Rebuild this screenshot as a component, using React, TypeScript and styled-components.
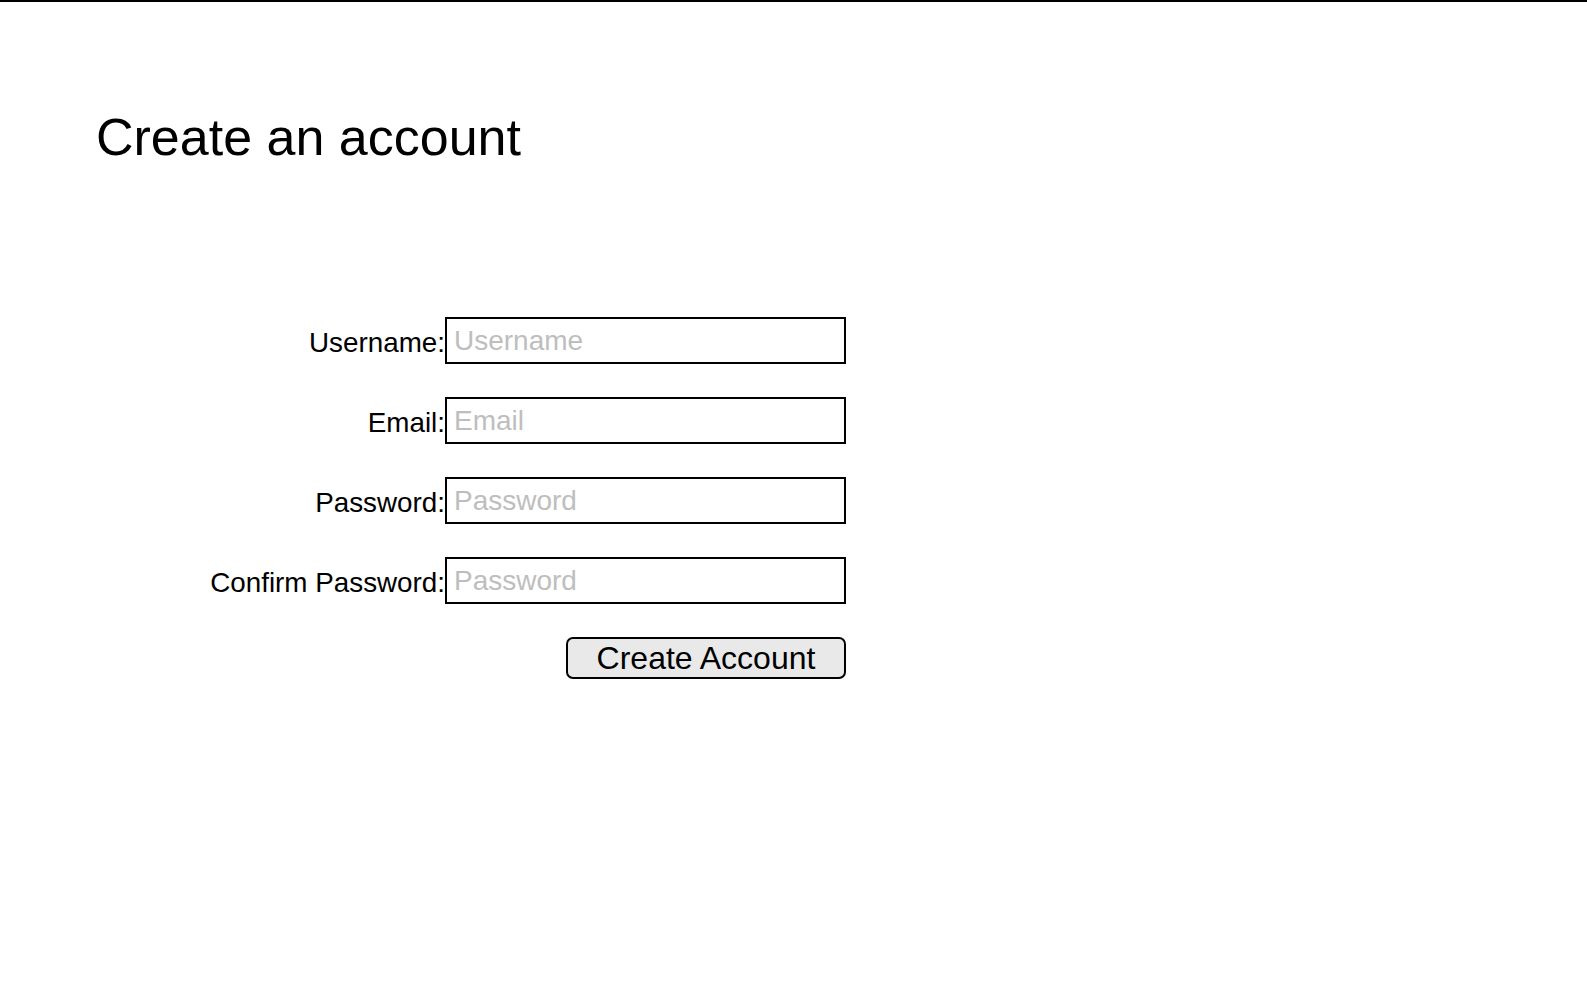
import { useState } from "react";
import styled, { createGlobalStyle } from "styled-components";

const GlobalStyle = createGlobalStyle`
  body {
    margin: 0;
    font-family: "Liberation Sans", Arial, sans-serif;
    background-color: #fff;
    color: #000;
  }
`;

const fields = [
  { name: "username", label: "Username:", type: "text", placeholder: "Username" },
  { name: "email", label: "Email:", type: "email", placeholder: "Email" },
  { name: "password", label: "Password:", type: "password", placeholder: "Password" },
  { name: "confirm", label: "Confirm Password:", type: "password", placeholder: "Password" },
];

const App = () => {
  const [values, setValues] = useState<Record<string, string>>({});

  return (
    <>
      <GlobalStyle />
      <Page>
        <Title>Create an account</Title>
        <Form onSubmit={(e) => e.preventDefault()}>
          {fields.map((f) => (
            <Row key={f.name}>
              <Label htmlFor={f.name}>{f.label}</Label>
              <Input
                id={f.name}
                type={f.type}
                placeholder={f.placeholder}
                value={values[f.name] ?? ""}
                onChange={(e) => setValues({ ...values, [f.name]: e.target.value })}
              />
            </Row>
          ))}
          <Button type="submit">Create Account</Button>
        </Form>
      </Page>
    </>
  );
};

export default App;

const Page = styled.div`
  border-top: 2px solid #000;
  padding: 0 96px;
  min-height: 998px;
`;

const Title = styled.h1`
  margin: 105px 0 0;
  font-size: 52px;
  font-weight: normal;
`;

const Form = styled.form`
  display: grid;
  grid-template-columns: 349px 401px;
  row-gap: 33px;
  margin-top: 150px;
`;

const Row = styled.div`
  display: contents;
`;

const Label = styled.label`
  align-self: center;
  justify-self: end;
  padding-top: 5px;
  font-size: 27.8px;
`;

const Input = styled.input`
  box-sizing: border-box;
  height: 47px;
  padding: 0 7px;
  border: 2px solid #000;
  border-radius: 0;
  font-family: inherit;
  font-size: 28px;
  outline: none;

  &::placeholder {
    color: #bebebe;
  }
`;

const Button = styled.button`
  grid-column: 2;
  justify-self: end;
  box-sizing: border-box;
  width: 280px;
  height: 42px;
  padding: 0;
  border: 2px solid #000;
  border-radius: 7px;
  background-color: #e9e9e9;
  font-family: inherit;
  font-size: 32px;
  line-height: 1;
  color: #000;
  cursor: pointer;
`;
